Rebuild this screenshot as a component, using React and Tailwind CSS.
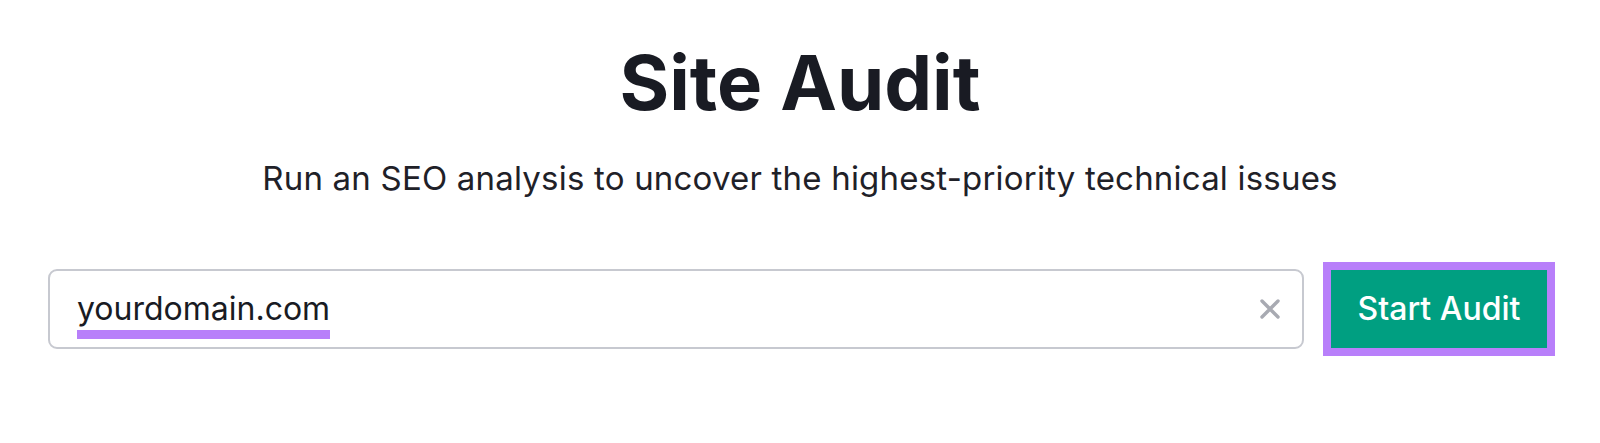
import React from 'react'

export default function App() {
    return (
        <div className="w-[1600px] h-[443px] bg-white font-['Inter',sans-serif] text-[#191b23]">
            <div className="flex flex-col items-center pt-[34px]">
                <h1 className="text-[76px] leading-[96px] font-bold">Site Audit</h1>
                <p className="mt-[28px] text-[33px] leading-[40px] tracking-[0.2px] text-[#1f2128]">Run an SEO analysis to uncover the highest-priority technical issues</p>
            </div>

            <div className="mt-[64px] flex items-center pl-[48px]">
                {/* domain input */}
                <div className="w-[1256px] h-[80px] rounded-[9px] border-2 border-[#c7c9d0] flex items-center pl-[27px] pr-[21px]">
                    <div className="relative flex-1">
                        <span className="text-[32px] leading-[40px] text-[#191b23]">yourdomain.com</span>
                        <div className="absolute left-0 top-[41px] w-[253px] h-[9px] bg-[#b87ffa]" />
                    </div>
                    <svg width="22" height="22" viewBox="0 0 22 22" className="text-[#a8aab2]">
                        <path d="M3 3 L19 19 M19 3 L3 19" stroke="currentColor" strokeWidth="3.4" strokeLinecap="round" />
                    </svg>
                </div>

                {/* start button with highlight */}
                <div className="ml-[19px] p-[8px] bg-[#b87ffa]">
                    <button className="w-[216px] h-[78px] bg-[#009f81] text-white text-[32px] font-medium">Start Audit</button>
                </div>
            </div>
        </div>
    )
}
